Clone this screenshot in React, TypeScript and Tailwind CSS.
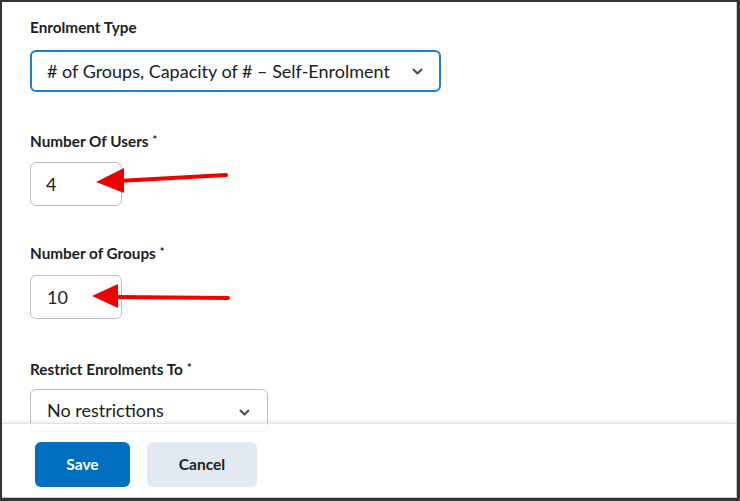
import React from "react"

const font = { fontFamily: "Lato, 'Noto Sans', sans-serif" }

function Chevron() {
  return (
    <svg width="11" height="7" viewBox="0 0 11 7" className="shrink-0">
      <path d="M1.5 1.5 L5.5 5.5 L9.5 1.5" fill="none" stroke="#494c4e" strokeWidth="2" strokeLinecap="round" strokeLinejoin="round" />
    </svg>
  )
}

function Label({ text, required, className }: { text: string; required?: boolean; className?: string }) {
  return (
    <div className={`h-5 text-[15.3px] leading-5 font-bold text-[#202122] ${className ?? ""}`}>
      {text}
      {required && <span className="ml-[4px] text-[11px] align-top leading-none relative top-[3px]">*</span>}
    </div>
  )
}

export default function App() {
  return (
    <div style={font} className="relative w-[740px] h-[501px] border-l-2 border-t-2 border-r-[3px] border-b-[3px] border-[#343434] bg-white">
      <div className="flex h-full flex-col border-r border-b border-[#c9c9c9]">
        {/* Form */}
        <div className="h-[431px] shrink-0 overflow-hidden pl-[28px] pt-[15px]">
          <Label text="Enrolment Type" />
          <div className="mt-[13px] flex h-[42px] w-[411px] items-center justify-between rounded-[6px] border-2 border-[#1c7fd0] pl-[15px] pr-[16px] text-[18px] text-[#202122]">
            <span>
              # of Groups, Capacity of # – Self-Enrolment
            </span>
            <Chevron />
          </div>

          <Label text="Number Of Users" required className="mt-[39px]" />
          <div className="mt-[11px] flex h-[44px] w-[92px] items-center rounded-[6px] border border-[#b8bfc6] pl-[15px] text-[18px] text-[#202122]">
            4
          </div>

          <Label text="Number of Groups" required className="mt-[37px]" />
          <div className="mt-[12px] flex h-[44px] w-[92px] items-center rounded-[6px] border border-[#b8bfc6] pl-[16px] text-[18px] text-[#202122]">
            10
          </div>

          <Label text="Restrict Enrolments To" required className="mt-[40px]" />
          <div className="mt-[10px] flex h-[43px] w-[238px] items-start justify-between rounded-[6px] border border-[#b8bfc6] pl-[16px] pr-[17px] pt-[7px] text-[18px] text-[#202122]">
            <span>No restrictions</span>
            <span className="pt-[12px]">
              <Chevron />
            </span>
          </div>
        </div>

        {/* Footer */}
        <div className="relative -mt-[10px] flex flex-1 gap-[17px] border-t border-[#dfe3e8] bg-white/80 pl-[33px] pt-[18px] shadow-[0_-2px_3px_rgba(0,0,0,0.06)]">
          <button className="h-[45px] w-[95px] rounded-[6px] bg-[#006fbf] text-[15.5px] font-bold text-white">
            Save
          </button>
          <button className="h-[45px] w-[110px] rounded-[6px] bg-[#e3e9f1] text-[15.5px] font-bold text-[#202122]">
            Cancel
          </button>
        </div>
      </div>

      {/* Annotation arrows */}
      <svg className="pointer-events-none absolute left-[-2px] top-[-2px]" width="740" height="501">
        <line x1="226" y1="175" x2="118" y2="181" stroke="#f00000" strokeWidth="4" strokeLinecap="round" />
        <polygon points="96,182 124,168 124,193" fill="#f00000" />
        <line x1="228" y1="298" x2="114" y2="297" stroke="#f00000" strokeWidth="4" strokeLinecap="round" />
        <polygon points="92,296 118,284 118,308" fill="#f00000" />
      </svg>
    </div>
  )
}
